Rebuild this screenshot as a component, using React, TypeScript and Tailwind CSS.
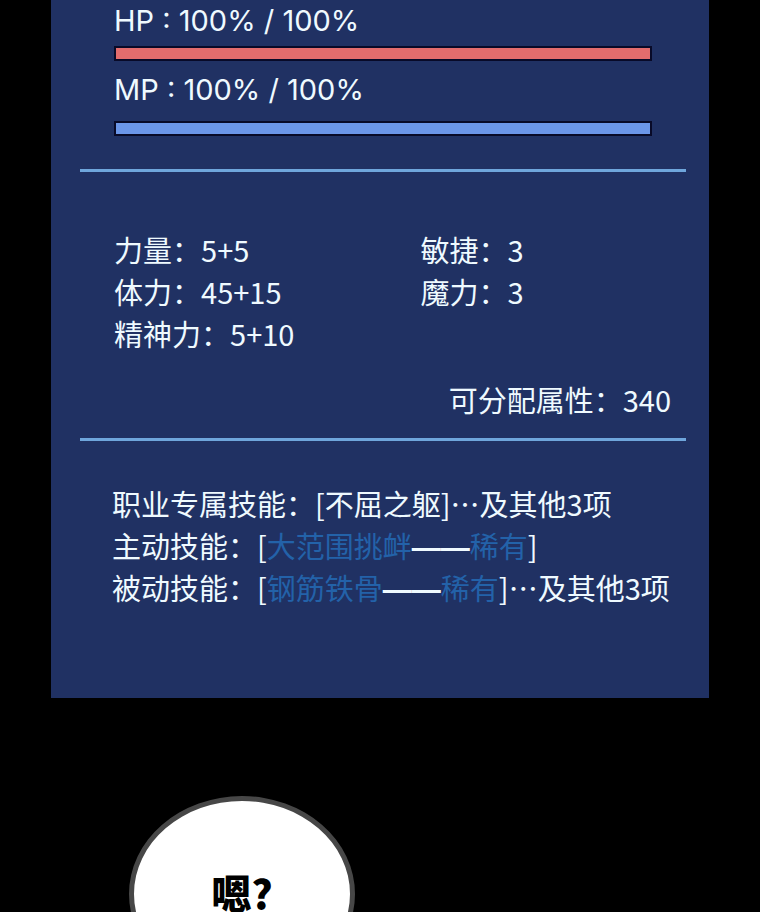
import type { ReactNode } from 'react'

const cjk = "font-['Noto_Sans_CJK_SC',sans-serif]"

const leftStats = [
  { name: '力量', value: '5+5' },
  { name: '体力', value: '45+15' },
  { name: '精神力', value: '5+10' },
]

const rightStats = [
  { name: '敏捷', value: '3' },
  { name: '魔力', value: '3' },
]

type GaugeProps = {
  label: string
  percent: number
  color: string
}

const Gauge = ({ label, percent, color }: GaugeProps) => (
  <div className="w-full">
    <p className="font-['Inter',sans-serif] text-[29px] leading-[42px] whitespace-pre">
      {label} : {percent}% / 100%
    </p>
    <div
      role="meter"
      aria-label={label}
      aria-valuenow={percent}
      aria-valuemin={0}
      aria-valuemax={100}
      className={label === 'HP' ? 'mt-1 h-[15px] border-2 border-[#080a28]' : 'mt-[10px] h-[15px] border-2 border-[#080a28]'}
    >
      <div className={`h-full ${color}`} style={{ width: `${percent}%` }} />
    </div>
  </div>
)

const StatList = ({ items }: { items: { name: string; value: string }[] }) => (
  <ul>
    {items.map(({ name, value }) => (
      <li key={name}>
        {name}：{value}
      </li>
    ))}
  </ul>
)

const Skill = ({ children }: { children: ReactNode }) => (
  <span className="text-[#2362a9]">{children}</span>
)

// full-width dash, each one as wide as a character
const Dash = () => <span className="font-['Liberation_Sans',sans-serif] leading-none font-bold">——</span>

const Divider = () => <hr className="mr-[23px] ml-[29px] h-[3px] border-0 bg-[#6fa6dc]" />

export default function App() {
  return (
    <main className={`flex h-screen flex-col overflow-hidden bg-black text-[#effaff] ${cjk}`}>
      <section className="mx-[51px] shrink-0 bg-[#203163] pb-[90px] text-[29px] leading-[42px]">
        <div className="flex flex-col gap-2 pr-[57px] pb-[33px] pl-[63px]">
          <Gauge label="HP" percent={100} color="bg-[#e36c6d]" />
          <Gauge label="MP" percent={100} color="bg-[#6b96e8]" />
        </div>

        <Divider />

        <div className="grid grid-cols-2 gap-x-12 pt-14 pr-[30px] pl-[63px]">
          <StatList items={leftStats} />
          <StatList items={rightStats} />
        </div>
        <p className="pt-6 pr-[38px] pb-[18px] text-right">可分配属性：340</p>

        <Divider />

        <ul className="pt-[41px] pl-[61px] whitespace-nowrap">
          <li>职业专属技能：[不屈之躯]…及其他3项</li>
          <li>
            主动技能：[<Skill>大范围挑衅</Skill>
            <Dash />
            <Skill>稀有</Skill>]
          </li>
          <li>
            被动技能：[<Skill>钢筋铁骨</Skill>
            <Dash />
            <Skill>稀有</Skill>]…及其他3项
          </li>
        </ul>
      </section>

      <div className="mt-[98px] ml-[129px] flex h-[196px] w-[226px] shrink-0 items-center justify-center rounded-[50%] border-[5px] border-[#474747] bg-white pb-1">
        <p className="text-[40px] leading-9 font-black text-black">嗯?</p>
      </div>
    </main>
  )
}
